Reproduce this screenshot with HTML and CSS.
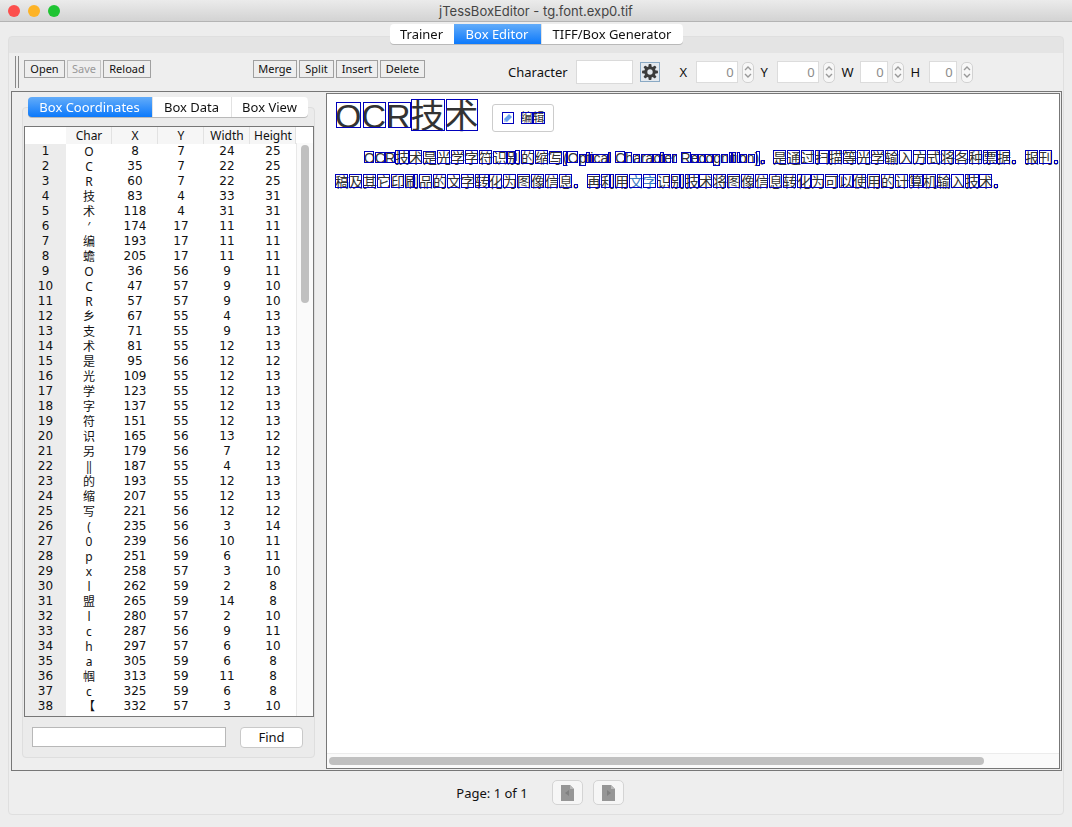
FILE: index.html
```html
<!DOCTYPE html>
<html lang="en">
<head>
<meta charset="utf-8">
<title>jTessBoxEditor - tg.font.exp0.tif</title>
<link rel="stylesheet" href="styles.css">
</head>
<body>
<header class="titlebar">
  <div class="lights"><span class="light red"></span><span class="light amber"></span><span class="light green"></span></div>
  <h1 class="window-title">jTessBoxEditor - tg.font.exp0.tif</h1>
</header>
<main class="frame">
  <nav class="tabs main-tabs">
    <button class="tab">Trainer</button><button class="tab selected">Box Editor</button><button class="tab">TIFF/Box Generator</button>
  </nav>
  <div class="panel">
    <div class="toolbar">
      <span class="grip"></span>
      <div class="group file-group">
        <button class="tool open">Open</button><button class="tool save" disabled>Save</button><button class="tool reload">Reload</button>
      </div>
      <div class="group edit-group">
        <button class="tool merge">Merge</button><button class="tool split-btn">Split</button><button class="tool insert">Insert</button><button class="tool delete">Delete</button>
      </div>
      <div class="fields">
        <label for="char">Character</label>
        <input id="char" class="char-input" type="text">
        <button class="gear" aria-label="Convert">
          <svg width="16" height="16" viewBox="0 0 16 16"><g fill="#3c3c3c"><rect x="6.5" y="0" width="3" height="16" rx="1"/><rect x="0" y="6.5" width="16" height="3" rx="1"/><rect x="6.5" y="0" width="3" height="16" rx="1" transform="rotate(45 8 8)"/><rect x="6.5" y="0" width="3" height="16" rx="1" transform="rotate(-45 8 8)"/><circle cx="8" cy="8" r="5.8"/></g><circle cx="8" cy="8" r="2.7" fill="#e4e9ee"/></svg>
        </button>
        <label class="axis first" for="fx">X</label><input id="fx" class="num wide" type="text" value="0" disabled><span class="spin"><button aria-label="X up"><svg viewBox="0 0 8 6"><path d="M1 5L4 2L7 5"/></svg></button><button aria-label="X down"><svg viewBox="0 0 8 6"><path d="M1 1L4 4L7 1"/></svg></button></span>
        <label class="axis" for="fy">Y</label><input id="fy" class="num wide" type="text" value="0" disabled><span class="spin"><button aria-label="Y up"><svg viewBox="0 0 8 6"><path d="M1 5L4 2L7 5"/></svg></button><button aria-label="Y down"><svg viewBox="0 0 8 6"><path d="M1 1L4 4L7 1"/></svg></button></span>
        <label class="axis w" for="fw">W</label><input id="fw" class="num" type="text" value="0" disabled><span class="spin"><button aria-label="W up"><svg viewBox="0 0 8 6"><path d="M1 5L4 2L7 5"/></svg></button><button aria-label="W down"><svg viewBox="0 0 8 6"><path d="M1 1L4 4L7 1"/></svg></button></span>
        <label class="axis w" for="fh">H</label><input id="fh" class="num" type="text" value="0" disabled><span class="spin"><button aria-label="H up"><svg viewBox="0 0 8 6"><path d="M1 5L4 2L7 5"/></svg></button><button aria-label="H down"><svg viewBox="0 0 8 6"><path d="M1 1L4 4L7 1"/></svg></button></span>
      </div>
    </div>
    <div class="split">
      <section class="side">
        <nav class="tabs side-tabs">
          <button class="tab selected">Box Coordinates</button><button class="tab">Box Data</button><button class="tab">Box View</button>
        </nav>
        <div class="side-panel">
          <div class="table-box">
            <table class="coords">
              <thead><tr><th class="rowno"></th><th>Char</th><th>X</th><th>Y</th><th>Width</th><th>Height</th></tr></thead>
              <tbody id="rows"></tbody>
            </table>
            <div class="vtrack"><span class="vthumb"></span></div>
          </div>
          <form class="find">
            <input class="find-input" type="text" aria-label="Find text">
            <button class="find-btn" type="button">Find</button>
          </form>
        </div>
      </section>
      <section class="viewer">
        <div class="page">
          <div class="headline"><h2>OCR技术</h2><span class="edit"><svg width="12" height="12" viewBox="0 0 12 12"><path d="M2 7L7 2L10 5L5 10L2 10Z" fill="#64a0ee"/><path d="M2 7L5 10L2 10Z" fill="#b4cdf0"/></svg>编辑</span></div>
          <p class="line indent">OCR技术是光学字符识别的缩写<span class="latin">(Optical Character Recognition)</span>。是通过扫描等光学输入方式将各种票据。报刊<span class="stop">。</span></p>
          <p class="line">稿及其它印刷品的文字转化为图像信息。再利用<span class="link">文字</span>识别技术将图像信息转化为可以使用的计算机输入技术。</p>
          <svg id="boxes" class="boxes"></svg>
        </div>
        <div class="htrack"><span class="hthumb"></span></div>
      </section>
    </div>
    <footer class="status">
      <span class="page-no">Page: 1 of 1</span>
      <button class="nav" aria-label="Previous page" disabled><svg width="13" height="16" viewBox="0 0 13 16"><path d="M0 0H9L13 4V16H0Z" fill="#969696"/><path d="M9 0V4H13" fill="#b8b8b8"/><path d="M8 5V11L4 8Z" fill="#808080"/></svg></button>
      <button class="nav" aria-label="Next page" disabled><svg width="13" height="16" viewBox="0 0 13 16"><path d="M0 0H9L13 4V16H0Z" fill="#969696"/><path d="M9 0V4H13" fill="#b8b8b8"/><path d="M5 5V11L9 8Z" fill="#808080"/></svg></button>
    </footer>
  </div>
</main>
<script src="script.js"></script>
</body>
</html>
```
FILE: styles.css
```css
* { box-sizing: border-box; }
body {
  margin: 0;
  height: 100vh;
  display: flex;
  flex-direction: column;
  background: #ededed;
  color: #111;
  font: 13px/16px "Noto Sans", "Noto Sans CJK SC", sans-serif;
}
button, input { font: inherit; color: inherit; margin: 0; padding: 0; }
input { border-radius: 0; }

.titlebar {
  flex: none;
  display: grid;
  grid-template-columns: 1fr auto 1fr;
  align-items: center;
  height: 22px;
  background: linear-gradient(#ebebeb, #d3d3d3);
  border-bottom: 1px solid #b4b4b4;
}
.lights { display: flex; gap: 8px; padding-left: 8px; }
.light { width: 12px; height: 12px; border-radius: 50%; }
.red { background: #fc4f4d; }
.amber { background: #fdb326; }
.green { background: #1fc433; }
.window-title { margin: 0; padding-top: 1px; font: 13px/20px Inter, sans-serif; color: #444; }

.frame {
  flex: 1;
  min-height: 0;
  display: flex;
  flex-direction: column;
  padding: 2px 8px 12px;
}
.tabs { display: flex; align-self: center; position: relative; z-index: 1; filter: drop-shadow(0 1px 0 #b9b9b9); }
.tab {
  height: 20px;
  padding: 0;
  border: 0;
  border-left: 1px solid #e2e2e2;
  background: #fff;
  white-space: nowrap;
}
.tab:first-child { border-radius: 4px 0 0 4px; border-left: 0; }
.tab:last-child { border-radius: 0 4px 4px 0; }
.selected { background: linear-gradient(#63acf9, #0c79fb); color: #fff; border-left: 0; }
.main-tabs .tab:nth-child(1) { width: 64px; }
.main-tabs .tab:nth-child(2) { width: 87px; }
.main-tabs .tab:nth-child(3) { width: 142px; }

.panel {
  flex: 1;
  min-height: 0;
  display: flex;
  flex-direction: column;
  margin-top: -8px;
  padding-top: 16px;
  border: 1px solid #dfdfdf;
  border-radius: 4px;
  background: linear-gradient(#e4e4e4 16px, #eee 16px);
}
.toolbar { flex: none; display: flex; align-items: center; height: 38px; padding-left: 6px; }
.grip { width: 4px; height: 32px; border: 1px solid #888; border-width: 0 1px; }
.group { display: flex; gap: 2px; align-self: flex-start; padding-top: 7px; }
.file-group { margin-left: 5px; }
.edit-group { margin-left: 102px; }
.tool { height: 18px; border: 1px solid #a0a0a0; background: #eee; font-size: 11px; line-height: 14px; }
.tool:disabled { color: #999; border-color: #c4c4c4; }
.open { width: 41px; }
.save { width: 34px; }
.reload { width: 48px; }
.merge { width: 44px; }
.split-btn { width: 35px; }
.insert { width: 42px; }
.delete { width: 45px; }
.fields { display: flex; align-items: center; margin-left: 83px; }
.char-input { width: 57px; height: 24px; margin-left: 8px; border: 1px solid #dadada; background: #fff; }
.gear {
  display: grid;
  place-items: center;
  width: 20px;
  height: 20px;
  margin-left: 7px;
  border: 1px solid #8aa9c4;
  background: #e4e9ee;
}
.axis { width: 16px; margin-left: 7px; }
.axis.first { margin-left: 20px; }
.axis.w { width: 18px; }
.num { width: 28px; height: 22px; padding-right: 3px; border: 1px solid #dcdcdc; background: #fff; color: #8c8c8c; text-align: right; }
.num.wide { width: 42px; }
.spin {
  display: flex;
  flex-direction: column;
  justify-content: center;
  gap: 2px;
  width: 12px;
  height: 21px;
  margin-left: 4px;
  border: 1px solid #d2d2d2;
  border-radius: 5px;
  background: #f7f7f7;
}
.spin button { display: flex; justify-content: center; border: 0; background: none; }
.spin svg { width: 8px; height: 6px; fill: none; stroke: #999; stroke-width: 1.4; }

.split {
  flex: 1;
  min-height: 0;
  display: flex;
  margin: 0 1px 0 2px;
  border: 1px solid #777;
  padding: 1px;
}
.side { flex: none; width: 313px; display: flex; flex-direction: column; padding: 4px 11px 11px 9px; }
.side-tabs { margin-right: 2px; }
.side-tabs .tab:nth-child(1) { width: 124px; }
.side-tabs .tab:nth-child(2) { width: 79px; }
.side-tabs .tab:nth-child(3) { width: 77px; }
.side-panel {
  flex: 1;
  min-height: 0;
  display: flex;
  flex-direction: column;
  margin-top: -10px;
  padding: 18px 0 0 1px;
  border: 1px solid #dedede;
  border-radius: 4px;
  background: #ebebeb;
}
.table-box { flex: 1; min-height: 0; display: flex; overflow: hidden; border: 1px solid #777; background: #fff; }
.coords { flex: none; width: calc(100% - 17px); height: 0; table-layout: fixed; border-collapse: collapse; text-align: center; }
.coords th, .coords td { padding: 0; height: 15px; font-size: 12px; line-height: 15px; font-weight: normal; }
.coords td { font-family: "DejaVu Sans", "Noto Sans CJK SC", sans-serif; }
.coords .cell-char { font-family: "Noto Sans", "Noto Sans CJK SC", sans-serif; }
.coords thead th { width: 46px; padding-top: 1px; line-height: 16px; background: #f6f6f6; box-shadow: inset -1px 0 #e2e2e2; }
.coords thead .rowno { width: auto; background: #fff; box-shadow: none; }
.coords tbody .rowno { background: #ececec; font-family: "DejaVu Sans", sans-serif; }
.vtrack { flex: none; width: 17px; margin-top: 16px; padding: 2px 4px; border-left: 1px solid #e8e8e8; background: #fafafa; }
.vthumb { display: block; width: 8px; height: 158px; border-radius: 4px; background: #c0c0c0; }
.find { flex: none; display: flex; justify-content: space-between; align-items: center; height: 40px; padding: 0 11px 0 8px; }
.find-input { width: 194px; height: 20px; border: 1px solid #b8b8b8; background: #fff; }
.find-btn { width: 63px; height: 21px; border: 1px solid #c9c9c9; border-radius: 4px; background: #fff; }

.viewer { flex: 1; min-width: 0; display: flex; flex-direction: column; border: 1px solid #777; background: #fff; }
.page {
  flex: 1;
  min-height: 0;
  position: relative;
  overflow: hidden;
  padding: 2px 0 0 8px;
  color: #333;
  font-family: "Liberation Sans", "Noto Sans CJK SC", sans-serif;
  font-size: 14px;
  line-height: 24px;
}
.headline { display: flex; align-items: center; height: 50px; padding-bottom: 10px; }
.headline h2 { margin: 0; font-size: 34px; line-height: 40px; font-weight: normal; white-space: nowrap; }
.edit {
  display: flex;
  align-items: center;
  gap: 7px;
  width: 62px;
  height: 28px;
  margin: 4px 0 0 13px;
  padding-left: 9px;
  border: 1px solid #ccc;
  border-radius: 3px;
  font-size: 12px;
}
.line { margin: 0; white-space: nowrap; }
.indent { padding-left: 29px; }
.latin { display: inline-block; width: 196px; }
.stop { font-feature-settings: "halt"; }
.link { color: #3a7cc4; }
.boxes { position: absolute; top: 0; left: 0; width: 100%; height: 100%; fill: none; stroke: #0000bb; }
.htrack { flex: none; height: 15px; padding: 3px 2px; border-top: 1px solid #ececec; background: #fafafa; }
.hthumb { display: block; width: 90%; height: 8px; border-radius: 4px; background: #c0c0c0; }

.status { flex: none; display: flex; align-items: center; justify-content: center; height: 43px; gap: 10px; padding-left: 8px; }
.page-no { margin-right: 14px; }
.nav { display: grid; place-items: center; width: 31px; height: 25px; border: 1px solid #d4d4d4; border-radius: 5px; background: #f6f6f6; }
```
FILE: script.js
```js
const records = `O 8 7 24 25
C 35 7 22 25
R 60 7 22 25
技 83 4 33 31
术 118 4 31 31
′ 174 17 11 11
编 193 17 11 11
蟾 205 17 11 11
O 36 56 9 11
C 47 57 9 10
R 57 57 9 10
乡 67 55 4 13
支 71 55 9 13
术 81 55 12 13
是 95 56 12 12
光 109 55 12 13
学 123 55 12 13
字 137 55 12 13
符 151 55 12 13
识 165 56 13 12
另 179 56 7 12
‖ 187 55 4 13
的 193 55 12 13
缩 207 55 12 13
写 221 56 12 12
( 235 56 3 14
0 239 56 10 11
p 251 59 6 11
x 258 57 3 10
l 262 59 2 8
盟 265 59 14 8
l 280 57 2 10
c 287 56 9 11
h 297 57 6 10
a 305 59 6 8
帼 313 59 11 8
c 325 59 6 8
【 332 57 3 10`.split("\n").map(line => line.split(" "));

const tbody = document.getElementById("rows");
records.concat([["", "", "", "", ""]]).forEach((rec, i) => {
  const tr = tbody.insertRow();
  const no = document.createElement("th");
  no.className = "rowno";
  no.textContent = rec[0] ? i + 1 : "";
  tr.append(no);
  rec.forEach((value, col) => {
    const td = tr.insertCell();
    td.textContent = value;
    if (col === 0) td.className = "cell-char";
  });
});

const boxes = records.map(r => r.slice(1).map(Number));
// remaining Latin letters of the first line
boxes.push([336, 59, 6, 8], [344, 59, 4, 8], [353, 57, 9, 10], [363, 59, 6, 8], [370, 59, 6, 8],
  [377, 59, 7, 8], [385, 59, 6, 11], [393, 59, 6, 8], [401, 57, 2, 10], [404, 57, 3, 10],
  [409, 57, 2, 10], [412, 59, 6, 8], [420, 59, 6, 8], [428, 56, 3, 14], [433, 65, 3, 3]);
// full-width characters, one every 14px: c whole, s split after the left part,
// r split before the right part, o full stop
function addRun(x, y, pattern) {
  [...pattern].forEach((kind, i) => {
    const left = x + i * 14;
    if (kind === "c") boxes.push([left, y, 12, 13]);
    if (kind === "s") boxes.push([left, y, 4, 13], [left + 4, y, 9, 13]);
    if (kind === "r") boxes.push([left, y, 8, 13], [left + 9, y, 3, 13]);
    if (kind === "o") boxes.push([left + 1, y + 10, 3, 3]);
  });
}
addRun(445, 55, "cccscccccccccccscocco");
addRun(7, 79, "cccccrccccsccccccocrccccrscccccccsccsccccscccsco");

const origin = { x: 1.5, y: 1.5 };
const ns = "http://www.w3.org/2000/svg";
const layer = document.getElementById("boxes");
boxes.forEach(([x, y, w, h]) => {
  const rect = document.createElementNS(ns, "rect");
  rect.setAttribute("x", x + origin.x);
  rect.setAttribute("y", y + origin.y);
  rect.setAttribute("width", w);
  rect.setAttribute("height", h);
  layer.append(rect);
});
```
